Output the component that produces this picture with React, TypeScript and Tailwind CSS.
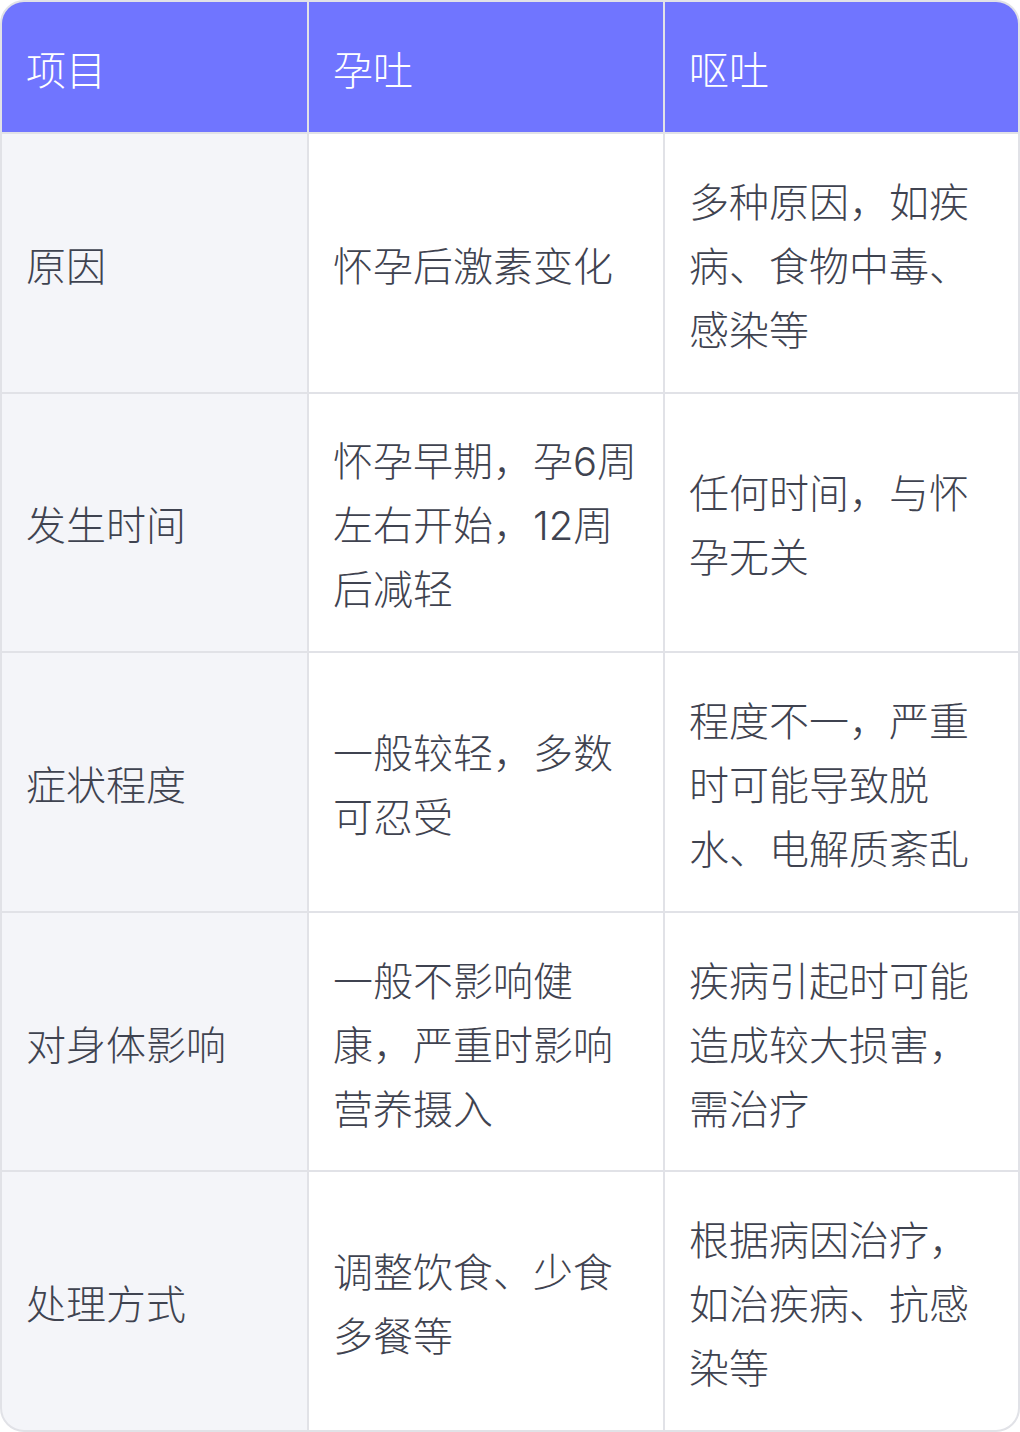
import React from 'react';

const headers = ['项目', '孕吐', '呕吐'];

const rows: [string, string, string][] = [
  ['原因', '怀孕后激素变化', '多种原因，如疾病、食物中毒、感染等'],
  ['发生时间', '怀孕早期，孕6周左右开始，12周后减轻', '任何时间，与怀孕无关'],
  ['症状程度', '一般较轻，多数可忍受', '程度不一，严重时可能导致脱水、电解质紊乱'],
  ['对身体影响', '一般不影响健康，严重时影响营养摄入', '疾病引起时可能造成较大损害，需治疗'],
  ['处理方式', '调整饮食、少食多餐等', '根据病因治疗，如治疾病、抗感染等'],
];

const App: React.FC = () => {
  return (
    <div
      className="w-[1020px] h-[1432px] bg-white"
      style={{ fontFamily: 'Inter, "Noto Sans CJK SC", sans-serif' }}
    >
      <div className="h-full overflow-hidden rounded-[24px] border-2 border-[#e1e2e7] bg-[#e1e2e7]">
        <div className="grid h-full grid-cols-[305px_354px_1fr] grid-rows-[130px_repeat(5,1fr)] gap-[2px]">
          {headers.map(h => (
            <div key={h} className="flex items-center bg-[#7075ff] pl-[24px] pr-[14px] pt-[8px] text-[40px] font-light text-white">
              {h}
            </div>
          ))}
          {rows.map(row =>
            row.map((cell, i) => (
              <div
                key={row[0] + i}
                className={`flex items-center pl-[24px] pr-[14px] pt-[8px] text-[40px] font-light leading-[64px] text-[#3f4350] ${
                  i === 0 ? 'bg-[#f4f5f9]' : 'bg-white'
                }`}
              >
                <p className="max-w-[310px] break-all">{cell}</p>
              </div>
            ))
          )}
        </div>
      </div>
    </div>
  );
};

export default App;
